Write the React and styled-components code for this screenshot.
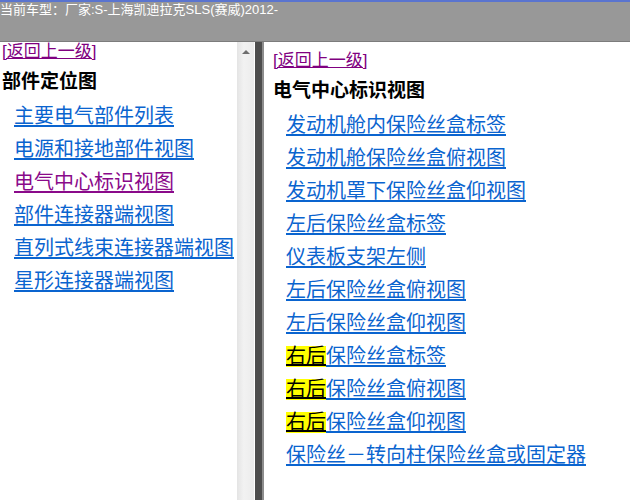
import styled, { createGlobalStyle } from "styled-components";

const GlobalStyle = createGlobalStyle`
html, body {
  margin: 0;
  padding: 0;
  background: #ffffff;
}
body {
  font-family: "Liberation Sans", "Noto Sans CJK SC", sans-serif;
}
`;

const Page = styled.div`
width: 630px;
height: 500px;
display: flex;
flex-direction: column;
overflow: hidden;
`;

const TopBar = styled.div`
height: 42px;
flex-shrink: 0;
box-sizing: border-box;
background: #989898;
border-top: 2px solid #5a74cf;
border-bottom: 1px solid #7c7c7c;
color: #ffffff;
font-size: 13px;
line-height: 16px;
white-space: nowrap;
`;

const Frames = styled.div`
flex: 1;
display: flex;
min-height: 0;
`;

const Pane = styled.div`
width: ${props => props.width ? props.width : 'auto'};
flex: ${props => props.width ? 'none' : '1'};
box-sizing: border-box;
padding-top: ${props => props.top || '0px'};
padding-left: ${props => props.left || '0px'};
background: #ffffff;
overflow: hidden;
`;

const Scrollbar = styled.div`
width: 18px;
flex-shrink: 0;
background: linear-gradient(to right, #e4e4e4, #f2f2f2 40%, #ececec);
border-right: 1px solid #ffffff;
display: flex;
justify-content: center;
padding-top: 8px;
box-sizing: border-box;
`;

const ArrowUp = styled.div`
width: 0;
height: 0;
border-left: 4px solid transparent;
border-right: 4px solid transparent;
border-bottom: 4px solid #6e6e6e;
`;

const Splitter = styled.div`
width: 7px;
flex-shrink: 0;
background: #4e4e4e;
border-right: 2px solid #8d8d8d;
`;

const Back = styled.a`
display: inline-block;
font-size: 17px;
line-height: 20px;
color: #800080;
text-decoration: underline;
`;

const Heading = styled.div`
margin-top: 8px;
font-size: 19px;
line-height: 24px;
font-weight: bold;
color: #000000;
`;

const List = styled.div`
margin-top: 6px;
padding-left: ${props => props.indent};
display: flex;
flex-direction: column;
`;

const Item = styled.div`
height: 33px;
line-height: 33px;
font-size: 20px;
white-space: nowrap;
`;

const Link = styled.a`
color: ${props => props.visited ? '#8a0a8a' : '#0a64cf'};
text-decoration: underline;
text-underline-offset: 2px;
`;

const Mark = styled.span`
display: inline-block;
background: #ffff00;
color: #000000;
line-height: 21px;
text-decoration: underline;
text-underline-offset: 1px;
`;

const leftLinks = [
  { text: "主要电气部件列表" },
  { text: "电源和接地部件视图" },
  { text: "电气中心标识视图", visited: true },
  { text: "部件连接器端视图" },
  { text: "直列式线束连接器端视图" },
  { text: "星形连接器端视图" },
];

const rightLinks = [
  { text: "发动机舱内保险丝盒标签" },
  { text: "发动机舱保险丝盒俯视图" },
  { text: "发动机罩下保险丝盒仰视图" },
  { text: "左后保险丝盒标签" },
  { text: "仪表板支架左侧" },
  { text: "左后保险丝盒俯视图" },
  { text: "左后保险丝盒仰视图" },
  { mark: "右后", text: "保险丝盒标签" },
  { mark: "右后", text: "保险丝盒俯视图" },
  { mark: "右后", text: "保险丝盒仰视图" },
  { text: "保险丝－转向柱保险丝盒或固定器" },
];

const App = () => {
  return (
    <Page>
      <GlobalStyle />
      <TopBar>当前车型：厂家:S-上海凯迪拉克SLS(赛威)2012-</TopBar>
      <Frames>
        <Pane width="237px" left="2px">
          <Back href="#">[返回上一级]</Back>
          <Heading>部件定位图</Heading>
          <List indent="12px">
            {leftLinks.map(l => (
              <Item key={l.text}>
                <Link href="#" visited={l.visited ? 1 : 0}>{l.text}</Link>
              </Item>
            ))}
          </List>
        </Pane>
        <Scrollbar>
          <ArrowUp />
        </Scrollbar>
        <Splitter />
        <Pane top="9px" left="9px">
          <Back href="#">[返回上一级]</Back>
          <Heading>电气中心标识视图</Heading>
          <List indent="13px">
            {rightLinks.map(l => (
              <Item key={l.text + (l.mark || "")}>
                <Link href="#">
                  {l.mark && <Mark>{l.mark}</Mark>}
                  {l.text}
                </Link>
              </Item>
            ))}
          </List>
        </Pane>
      </Frames>
    </Page>
  );
};

export default App;
